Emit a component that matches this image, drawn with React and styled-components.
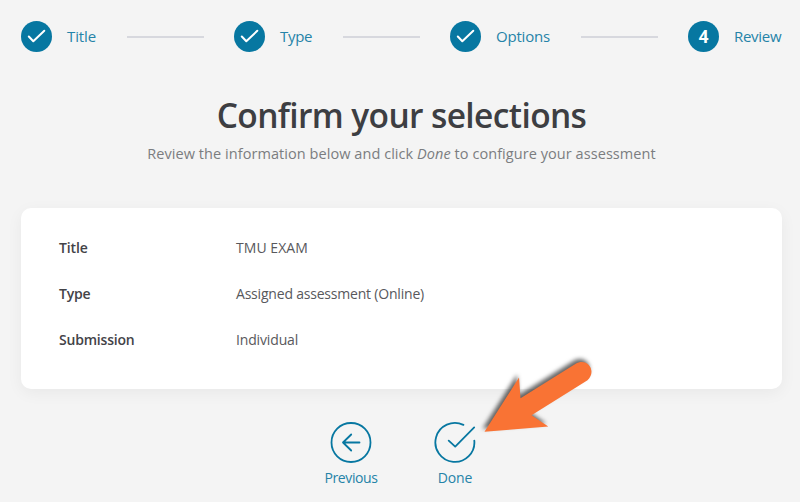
import React from "react";
import styled, { createGlobalStyle } from "styled-components";

const GlobalStyle = createGlobalStyle`
  * {
    box-sizing: border-box;
  }
  body {
    margin: 0;
    background: #f4f4f4;
    font-family: "Segoe UI", "Open Sans", "Noto Sans", sans-serif;
    overflow: hidden;
  }
`;

let Page = styled.main`
  position: relative;
  width: 800px;
  height: 502px;
  padding: 21px 18px 0 21px;
  background: #f4f4f4;
`;
let Steps = styled.ol`
  display: flex;
  align-items: center;
  margin: 0;
  padding: 0;
  list-style: none;
`;
let Step = styled.li`
  display: flex;
  align-items: center;
`;
let StepCircle = styled.span`
  display: flex;
  align-items: center;
  justify-content: center;
  width: 31px;
  height: 31px;
  border-radius: 50%;
  background: #0777a1;
  color: #ffffff;
  font-size: 17px;
  font-weight: 700;
  line-height: 31px;
`;
let StepLabel = styled.span`
  width: ${(props) => props.$width}px;
  margin-left: 15px;
  padding-bottom: 1px;
  color: #2583a8;
  font-size: 15px;
  line-height: 20px;
  letter-spacing: ${(props) => props.$spacing || 0}px;
  white-space: nowrap;
`;
let StepLine = styled.span`
  width: 77px;
  height: 2px;
  margin: 1px 30px 0;
  background: #d7d8de;
`;
let Heading = styled.h1`
  margin: 38px 0 0;
  color: #3d3e42;
  font-size: 33.5px;
  font-weight: 600;
  line-height: 50px;
  letter-spacing: -0.62px;
  text-align: center;
  white-space: nowrap;
`;
let Subheading = styled.p`
  margin: 3px 0 0;
  color: #7b7d80;
  font-size: 14.5px;
  line-height: 22px;
  letter-spacing: 0.06px;
  text-align: center;
  white-space: nowrap;
`;
let Card = styled.dl`
  display: grid;
  grid-template-columns: 177px 1fr;
  grid-auto-rows: 46px;
  align-items: center;
  height: 181px;
  margin: 43px 0 0;
  padding: 17px 38px 15px;
  border-radius: 10px;
  background: #ffffff;
  box-shadow: 0 4px 16px rgba(0, 0, 0, 0.05);
  font-size: 14px;
  line-height: 20px;
`;
let Term = styled.dt`
  color: #434347;
  font-weight: 600;
  letter-spacing: ${(props) => props.$spacing || 0}px;
`;
let Value = styled.dd`
  margin: 0;
  color: #58585c;
  letter-spacing: ${(props) => props.$spacing || 0}px;
`;
let Actions = styled.div`
  display: flex;
  justify-content: center;
  gap: 24px;
  margin-top: 32px;
  padding-left: 3px;
`;
let ActionButton = styled.button`
  display: flex;
  flex-direction: column;
  align-items: center;
  width: 80px;
  padding: 0;
  border: 0;
  background: none;
  color: #2583a8;
  font-family: inherit;
  font-size: 14px;
  line-height: 20px;
  letter-spacing: ${(props) => props.$spacing || 0}px;
`;
let ActionIcon = styled.svg`
  width: 42px;
  height: 42px;
  margin-bottom: 5px;
  fill: none;
  stroke: #0777a1;
  stroke-width: 1.8;
  stroke-linecap: round;
  stroke-linejoin: round;
`;
let Pointer = styled.svg`
  position: absolute;
  left: 470px;
  top: 345px;
  width: 140px;
  height: 100px;
  filter: drop-shadow(-1.5px -3px 2px rgba(0, 0, 0, 0.6));
`;

const steps = [
  { label: "Title", width: 30, spacing: -0.1, done: true },
  { label: "Type", width: 33, spacing: -0.3, done: true },
  { label: "Options", width: 55, spacing: -0.2, done: true },
  { label: "Review", width: 48, spacing: -0.3, done: false },
];

const details = [
  { term: "Title", value: "TMU EXAM", termSpacing: -0.1, valueSpacing: 0.05 },
  {
    term: "Type",
    value: "Assigned assessment (Online)",
    termSpacing: -0.2,
    valueSpacing: -0.2,
  },
  {
    term: "Submission",
    value: "Individual",
    termSpacing: -0.2,
    valueSpacing: -0.15,
  },
];

const CheckMark = () => (
  <svg width="31" height="31" viewBox="0 0 31 31" fill="none">
    <path
      d="M7.8 15.5 L12.3 20.3 L23.3 9.8"
      stroke="#fff"
      strokeWidth="2"
      strokeLinecap="round"
      strokeLinejoin="round"
    />
  </svg>
);

const App = () => {
  return (
    <Page>
      <GlobalStyle />
      <Steps>
        {steps.map((step, index) => (
          <Step key={step.label}>
            {index > 0 && <StepLine />}
            <StepCircle>{step.done ? <CheckMark /> : index + 1}</StepCircle>
            <StepLabel $width={step.width} $spacing={step.spacing}>
              {step.label}
            </StepLabel>
          </Step>
        ))}
      </Steps>
      <Heading>Confirm your selections</Heading>
      <Subheading>
        Review the information below and click <i>Done</i> to configure your
        assessment
      </Subheading>
      <Card>
        {details.map((item) => (
          <React.Fragment key={item.term}>
            <Term $spacing={item.termSpacing}>{item.term}</Term>
            <Value $spacing={item.valueSpacing}>{item.value}</Value>
          </React.Fragment>
        ))}
      </Card>
      <Actions>
        <ActionButton $spacing={-0.4}>
          <ActionIcon viewBox="0 0 42 42">
            <circle cx="21" cy="21.5" r="19.5" />
            <path d="M29.5 21.5 H13 M21.2 13.5 L13 21.5 L21.2 29.5" />
          </ActionIcon>
          Previous
        </ActionButton>
        <ActionButton $spacing={-0.1}>
          <ActionIcon viewBox="0 0 42 42">
            <path d="M29.4 3.9 A19.5 19.5 0 1 0 40.3 19.6" />
            <path d="M14.7 19.6 L21.2 25.6 L40.2 6.4" />
          </ActionIcon>
          Done
        </ActionButton>
      </Actions>
      <Pointer viewBox="470 345 140 100">
        <path
          fill="#f97334"
          d="M484.5 431.7 L519 377.5 L520.5 398.2 L576.5 363.3 C588 357.5 597 371.5 587.5 380.3 L531.5 415.3 L548.3 426.5 Z"
        />
      </Pointer>
    </Page>
  );
};

export default App;
